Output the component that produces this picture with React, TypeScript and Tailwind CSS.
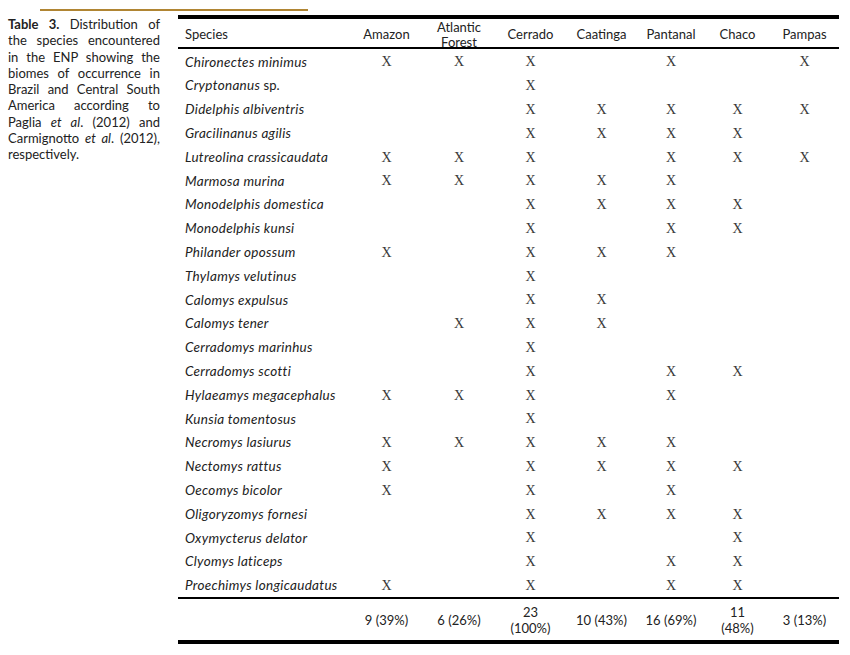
const biomes = ["Amazon", "Atlantic Forest", "Cerrado", "Caatinga", "Pantanal", "Chaco", "Pampas"];
const widths = ["w-[73px]", "w-[72px]", "w-[71px]", "w-[71px]", "w-[68px]", "w-[65px]", "w-[69px]"];

// marks in biome order: X = present, - = absent
const rows: { name: string; rest?: string; marks: string }[] = [
  { name: "Chironectes minimus", marks: "XXX-X-X" },
  { name: "Cryptonanus", rest: " sp.", marks: "--X----" },
  { name: "Didelphis albiventris", marks: "--XXXXX" },
  { name: "Gracilinanus agilis", marks: "--XXXX-" },
  { name: "Lutreolina crassicaudata", marks: "XXX-XXX" },
  { name: "Marmosa murina", marks: "XXXXX--" },
  { name: "Monodelphis domestica", marks: "--XXXX-" },
  { name: "Monodelphis kunsi", marks: "--X-XX-" },
  { name: "Philander opossum", marks: "X-XXX--" },
  { name: "Thylamys velutinus", marks: "--X----" },
  { name: "Calomys expulsus", marks: "--XX---" },
  { name: "Calomys tener", marks: "-XXX---" },
  { name: "Cerradomys marinhus", marks: "--X----" },
  { name: "Cerradomys scotti", marks: "--X-XX-" },
  { name: "Hylaeamys megacephalus", marks: "XXX-X--" },
  { name: "Kunsia tomentosus", marks: "--X----" },
  { name: "Necromys lasiurus", marks: "XXXXX--" },
  { name: "Nectomys rattus", marks: "X-XXXX-" },
  { name: "Oecomys bicolor", marks: "X-X-X--" },
  { name: "Oligoryzomys fornesi", marks: "--XXXX-" },
  { name: "Oxymycterus delator", marks: "--X--X-" },
  { name: "Clyomys laticeps", marks: "--X-XX-" },
  { name: "Proechimys longicaudatus", marks: "X-X-XX-" },
];

const totals = ["9 (39%)", "6 (26%)", "23 (100%)", "10 (43%)", "16 (69%)", "11 (48%)", "3 (13%)"];

function Line({ children, last }: { children: React.ReactNode; last?: boolean }) {
  return (
    <span className={`block ${last ? "" : "text-justify [text-align-last:justify]"}`}>{children}</span>
  );
}

export default function App() {
  return (
    <div className="w-[850px] h-[655px] bg-white text-[#222] font-['Lato',sans-serif] overflow-hidden">
      <div className="ml-[40px] mt-[9px] w-[268px] h-[2px] bg-[#b08533]" />

      <div className="flex mt-[4px]">
        {/* caption */}
        <div className="ml-[8px] w-[152px] mt-[1px] text-[13px] leading-[16.3px]">
          <Line>
            <b className="font-bold">Table 3.</b> Distribution of
          </Line>
          <Line>the species encountered</Line>
          <Line>in the ENP showing the</Line>
          <Line>biomes of occurrence in</Line>
          <Line>Brazil and Central South</Line>
          <Line>America according to</Line>
          <Line>
            Paglia <i>et al</i>. (2012) and
          </Line>
          <Line>
            Carmignotto <i>et al</i>. (2012),
          </Line>
          <Line last>respectively.</Line>
        </div>

        {/* table */}
        <div className="ml-[18px] w-[661px] text-[13px]">
          <div className="h-[4px] bg-black" />
          <div className="flex h-[28px] items-center pt-[3px]">
            <div className="w-[172px] pl-[7px]">Species</div>
            {biomes.map((b, i) => (
              <div key={b} className={`${widths[i]} text-center leading-[15px]`}>
                {b}
              </div>
            ))}
          </div>
          <div className="relative z-10 h-[2px] bg-black" />

          <div className="pt-[1px]">
            {rows.map((r) => (
              <div key={r.name} className="flex h-[23.8px] items-center">
                <div className="w-[172px] pl-[7px] whitespace-nowrap">
                  <i className="text-[13.5px] tracking-[0.3px]">{r.name}</i>
                  {r.rest}
                </div>
                {r.marks.split("").map((m, i) => (
                  <div
                    key={i}
                    className={`${widths[i]} text-center font-['Liberation_Serif',serif] text-[14px] text-[#3a3a3a]`}
                  >
                    {m === "X" ? "X" : ""}
                  </div>
                ))}
              </div>
            ))}
          </div>

          <div className="h-[2px] bg-black" />
          <div className="flex h-[41px] items-center">
            <div className="w-[172px]" />
            {totals.map((t, i) => (
              <div key={i} className={`${widths[i]} text-center leading-[16px] px-[8px]`}>
                {t}
              </div>
            ))}
          </div>
          <div className="h-[4px] bg-black" />
        </div>
      </div>
    </div>
  );
}
